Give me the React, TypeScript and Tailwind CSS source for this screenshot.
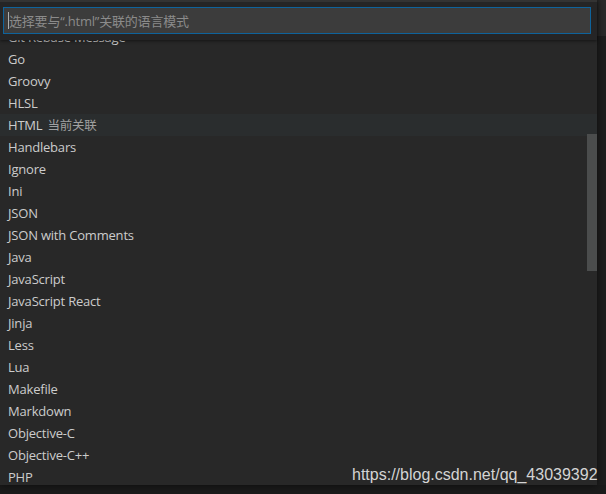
import React from "react";

const items = [
  "Git Rebase Message",
  "Go",
  "Groovy",
  "HLSL",
  "HTML",
  "Handlebars",
  "Ignore",
  "Ini",
  "JSON",
  "JSON with Comments",
  "Java",
  "JavaScript",
  "JavaScript React",
  "Jinja",
  "Less",
  "Lua",
  "Makefile",
  "Markdown",
  "Objective-C",
  "Objective-C++",
  "PHP",
];

export default function App() {
  return (
    <div
      className="relative w-[606px] h-[494px] overflow-hidden bg-[#1b1b1b] text-[13px]"
      style={{ fontFamily: '"Open Sans", "Noto Sans CJK SC", sans-serif' }}
    >
      <div className="flex">
        <div className="relative z-10 flex h-[485px] w-[597px] flex-col bg-[#282828] shadow-[0_0_8px_rgba(0,0,0,0.6)]">
          <div className="relative z-10 h-[40px] border-t-2 border-[#333333] bg-[#252526] pl-[3px] pr-[6px] pt-[5px] shadow-[0_1px_3px_rgba(0,0,0,0.5)]">
            <div className="flex h-[27px] items-center border border-[#0e639c] bg-[#3c3c3c] pl-[4px] pt-[2px]">
              <div className="-mt-[2px] h-[17px] w-px bg-[#aeafad]" />
              <span className="tracking-[-0.2px] text-[#8b8b8b]">选择要与“.html”关联的语言模式</span>
            </div>
          </div>
          <div className="relative flex-1 overflow-hidden">
            <div className="-mt-[14px] flex flex-col">
              {items.map((it) => (
                <div
                  key={it}
                  className={
                    "flex h-[22px] shrink-0 items-center pl-[8px] pt-[2px] tracking-[-0.2px] text-[#cccccc] " +
                    (it === "HTML" ? "bg-[#2a2d2e]" : "")
                  }
                >
                  <span>{it}</span>
                  {it === "HTML" && (
                    <span className="ml-[5px] text-[12.5px] text-[#a0a0a0]">当前关联</span>
                  )}
                </div>
              ))}
            </div>
            <div className="absolute right-0 top-[94px] h-[137px] w-[10px] bg-[#4b4d4d]" />
          </div>
        </div>
        <div className="flex w-[9px] flex-col">
          <div className="h-[36px] bg-[#2a2a2a]" />
          <div className="flex-1 bg-[#1e1e1e]" />
        </div>
      </div>
      <div
        className="absolute left-[352px] top-[465px] z-20 text-[16px] leading-[20px] text-[#d4d4d4]"
        style={{ fontFamily: '"Liberation Sans", Arial, sans-serif' }}
      >
        https://blog.csdn.net/qq_43039392
      </div>
    </div>
  );
}
